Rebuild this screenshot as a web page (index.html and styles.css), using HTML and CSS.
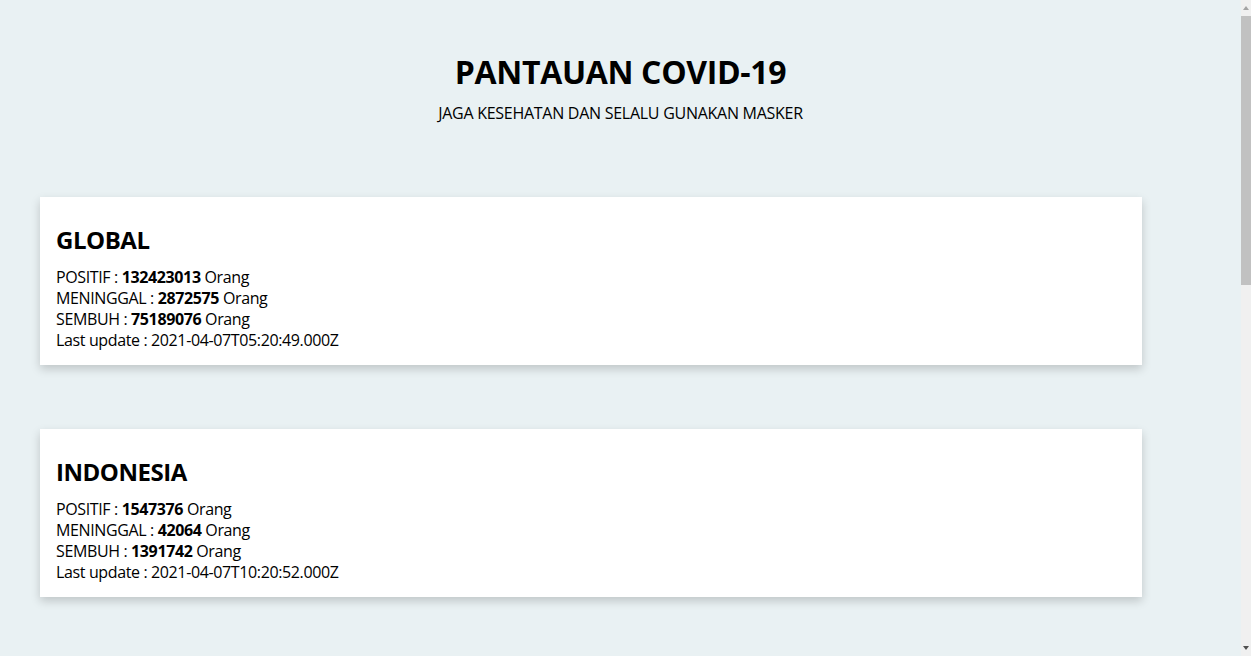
FILE: index.html
```html
<!DOCTYPE html>
<html lang="id">
<head>
<meta charset="utf-8">
<title>Pantauan COVID-19</title>
<link rel="stylesheet" href="styles.css">
</head>
<body>
  <header class="hero">
    <h1 class="hero-title">PANTAUAN COVID-19</h1>
    <p class="hero-sub">JAGA KESEHATAN DAN SELALU GUNAKAN MASKER</p>
  </header>
  <main class="cards">
    <section class="card">
      <h2 class="card-title">GLOBAL</h2>
      <div class="card-line">POSITIF : <b>132423013</b> Orang</div>
      <div class="card-line">MENINGGAL : <b>2872575</b> Orang</div>
      <div class="card-line">SEMBUH : <b>75189076</b> Orang</div>
      <div class="card-line">Last update : 2021-04-07T05:20:49.000Z</div>
    </section>
    <section class="card">
      <h2 class="card-title">INDONESIA</h2>
      <div class="card-line">POSITIF : <b>1547376</b> Orang</div>
      <div class="card-line">MENINGGAL : <b>42064</b> Orang</div>
      <div class="card-line">SEMBUH : <b>1391742</b> Orang</div>
      <div class="card-line">Last update : 2021-04-07T10:20:52.000Z</div>
    </section>
  </main>
  <div class="scrollbar" aria-hidden="true">
    <div class="sb-btn"><span class="sb-arrow sb-up"></span></div>
    <div class="sb-thumb"></div>
    <div class="sb-track"></div>
    <div class="sb-btn"><span class="sb-arrow sb-down"></span></div>
  </div>
</body>
</html>
```
FILE: styles.css
```css
html {
  background: #e9f1f3;
}
body {
  margin: 0;
  padding-right: 10px;
  font-family: "Open Sans", "Noto Sans", sans-serif;
  color: #000;
  background: #e9f1f3;
}
.hero {
  padding-top: 52px;
  text-align: center;
}
.hero-title {
  margin: 0;
  font-size: 32px;
  line-height: 40px;
  font-weight: 700;
  letter-spacing: -0.35px;
}
.hero-sub {
  margin: 11px 0 0;
  font-size: 16px;
  line-height: 21px;
  letter-spacing: -0.27px;
}
.cards {
  display: flex;
  flex-direction: column;
  gap: 64px;
  padding: 73px 0 925px 40px;
}
.card {
  width: 1102px;
  box-sizing: border-box;
  padding: 16px 16px 14px;
  background: #fff;
  box-shadow: 0 4px 9px rgba(0, 0, 0, 0.18);
}
.card-title {
  margin: 11px 0 11px;
  font-size: 24px;
  line-height: 32px;
  font-weight: 700;
  letter-spacing: -0.45px;
}
.card-line {
  font-size: 16px;
  line-height: 21px;
  letter-spacing: -0.37px;
}
.card-line b {
  font-weight: 700;
}

/* browser scrollbar overlay */
.scrollbar {
  position: fixed;
  top: 0;
  right: 0;
  width: 10px;
  height: 100vh;
  display: flex;
  flex-direction: column;
  background: #f0f0f0;
}
.sb-btn {
  height: 16px;
  flex: none;
  display: flex;
  align-items: center;
  justify-content: center;
}
.sb-thumb {
  height: 269px;
  flex: none;
  background: #c1c1c1;
}
.sb-track {
  flex: 1;
}
.sb-arrow {
  width: 0;
  height: 0;
  border-left: 3.5px solid transparent;
  border-right: 3.5px solid transparent;
}
.sb-up {
  border-bottom: 4px solid #a3a3a3;
}
.sb-down {
  border-top: 4px solid #505050;
}
```
